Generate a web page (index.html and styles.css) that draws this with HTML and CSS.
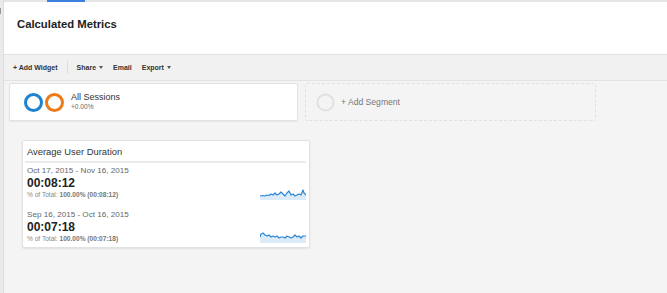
FILE: index.html
```html
<!DOCTYPE html>
<html>
<head>
<meta charset="utf-8">
<link rel="stylesheet" href="styles.css">
</head>
<body>
<div class="app">
  <aside class="rail"><span class="tick"></span></aside>
  <div class="main">
    <div class="topstrip"><span class="tab-indicator"></span></div>
    <header class="header">
      <h1 class="title">Calculated Metrics</h1>
    </header>
    <nav class="toolbar">
      <span class="tool">+ Add Widget</span>
      <span class="sep"></span>
      <span class="tool first">Share <i class="caret"></i></span>
      <span class="tool">Email</span>
      <span class="tool">Export <i class="caret"></i></span>
    </nav>
    <section class="segments">
      <div class="segment-card">
        <svg class="ring" width="19" height="19" viewBox="0 0 19 19"><circle cx="9.5" cy="9.5" r="8" fill="none" stroke="#1f82cf" stroke-width="3"/></svg>
        <svg class="ring" width="19" height="19" viewBox="0 0 19 19"><circle cx="9.5" cy="9.5" r="8" fill="none" stroke="#ef7a1a" stroke-width="3"/></svg>
        <div class="seg-text">
          <div class="seg-name">All Sessions</div>
          <div class="seg-delta">+0.00%</div>
        </div>
      </div>
      <div class="segment-add">
        <svg class="ring" width="19" height="19" viewBox="0 0 19 19"><circle cx="9.5" cy="9.5" r="8" fill="none" stroke="#e0e0e0" stroke-width="2"/></svg>
        <span class="add-label">+ Add Segment</span>
      </div>
    </section>
    <section class="widget">
      <div class="widget-title">Average User Duration</div>
      <div class="widget-rule"></div>
      <div class="metric">
        <div class="metric-text">
          <div class="range">Oct 17, 2015 - Nov 16, 2015</div>
          <div class="value">00:08:12</div>
          <div class="pct">% of Total: <b>100.00% (00:08:12)</b></div>
        </div>
        <svg class="spark" width="46" height="12" viewBox="0 0 46 12">
          <polygon fill="#dcebf8" points="0,8 3,7.5 5,8 7,7 9,7.5 11,6 13,7 15,5 17,7 19,6 21,4 23,6 25,8 27,5 29,3 31,7 33,6 35,8 37,7 39,6 41,7 43,2 44,5 46,7 46,12 0,12"/>
          <polyline fill="none" stroke="#2a86d6" stroke-width="1.2" stroke-linejoin="round" points="0,8 3,7.5 5,8 7,7 9,7.5 11,6 13,7 15,5 17,7 19,6 21,4 23,6 25,8 27,5 29,3 31,7 33,6 35,8 37,7 39,6 41,7 43,2 44,5 46,7"/>
        </svg>
      </div>
      <div class="metric second">
        <div class="metric-text">
          <div class="range">Sep 16, 2015 - Oct 16, 2015</div>
          <div class="value">00:07:18</div>
          <div class="pct">% of Total: <b>100.00% (00:07:18)</b></div>
        </div>
        <svg class="spark" width="46" height="12" viewBox="0 0 46 12">
          <polygon fill="#dcebf8" points="0,6 1,3 3,2 5,4 7,5 9,4 11,6 13,5 15,6 17,5 19,7 21,6 23,6 25,7 27,5 29,6 31,7 33,6 35,4 37,6 39,5 41,7 43,5 46,5 46,12 0,12"/>
          <polyline fill="none" stroke="#2a86d6" stroke-width="1.2" stroke-linejoin="round" points="0,6 1,3 3,2 5,4 7,5 9,4 11,6 13,5 15,6 17,5 19,7 21,6 23,6 25,7 27,5 29,6 31,7 33,6 35,4 37,6 39,5 41,7 43,5 46,5"/>
        </svg>
      </div>
    </section>
  </div>
</div>
</body>
</html>
```
FILE: styles.css
```css
* { box-sizing: border-box; }
html, body { margin: 0; padding: 0; }
body {
  background: #f4f4f4;
  font-family: "Liberation Sans", Arial, sans-serif;
  color: #333;
}
.app { display: flex; min-height: 293px; }
.rail {
  width: 4px;
  flex: none;
  background: #eaeaea;
  border-right: 1px solid #dedede;
  padding-top: 8px;
}
.tick { display: block; width: 1px; height: 6px; background: #999; }
.main { flex: 1; display: flex; flex-direction: column; }
.topstrip {
  height: 2px;
  background: #e6e6e6;
  padding-left: 43px;
}
.tab-indicator { display: block; width: 38px; height: 2px; background: #3d7fde; }
.header {
  height: 53px;
  background: #fff;
  border-bottom: 1px solid #e2e2e2;
  padding: 15px 0 0 13px;
}
.title {
  margin: 0;
  font-size: 11.3px;
  line-height: 14px;
  font-weight: bold;
  color: #222;
}
.toolbar {
  height: 26px;
  background: #f1f1f1;
  border-bottom: 1px solid #e3e3e3;
  display: flex;
  align-items: center;
  padding-left: 9px;
  gap: 10px;
  font-size: 7px;
  font-weight: bold;
  color: #333;
}
.tool { display: inline-flex; align-items: center; gap: 3px; }
.sep { width: 1px; height: 13px; background: #ddd; margin: 0 -1px 0 -1px; }
.caret {
  width: 0; height: 0;
  border-left: 2.5px solid transparent;
  border-right: 2.5px solid transparent;
  border-top: 3px solid #555;
}
.segments {
  display: flex;
  gap: 7px;
  padding: 2px 0 0 5px;
}
.segment-card {
  width: 289px;
  height: 38px;
  background: #fff;
  border: 1px solid #e2e2e2;
  border-radius: 2px;
  box-shadow: 0 1px 1px rgba(0,0,0,0.06);
  display: flex;
  align-items: center;
  padding-left: 14px;
  gap: 2px;
}
.ring { flex: none; display: block; }
.seg-text { margin-left: 5px; margin-top: -1px; }
.seg-name { font-size: 9px; line-height: 11px; color: #333; }
.seg-delta { font-size: 6.6px; line-height: 8px; color: #666; }
.segment-add {
  width: 291px;
  height: 38px;
  border: 1px dashed #e0e0e0;
  border-radius: 2px;
  display: flex;
  align-items: center;
  padding-left: 10px;
  gap: 6px;
}
.add-label { font-size: 8.6px; color: #777; }
.widget {
  margin: 19px 0 0 18px;
  width: 288px;
  background: #fff;
  border: 1px solid #e2e2e2;
  border-radius: 2px;
  box-shadow: 0 1px 2px rgba(0,0,0,0.08);
  padding: 5px 3px 4px 4px;
}
.widget-title {
  font-size: 9.4px;
  line-height: 12px;
  color: #333;
  margin-bottom: 3px;
}
.widget-rule { height: 2px; background: #ebebeb; margin: 0 0 2px -2px; }
.metric { display: flex; justify-content: space-between; align-items: flex-end; }
.metric.second { margin-top: 10px; }
.range { font-size: 8.1px; line-height: 11px; color: #666; }
.value { font-size: 12px; line-height: 15px; font-weight: bold; color: #222; }
.pct { font-size: 6.6px; line-height: 8px; color: #888; }
.pct b { color: #777; }
.spark { display: block; margin-bottom: -1px; }
.metric.second .spark { margin-bottom: 0; }
```
